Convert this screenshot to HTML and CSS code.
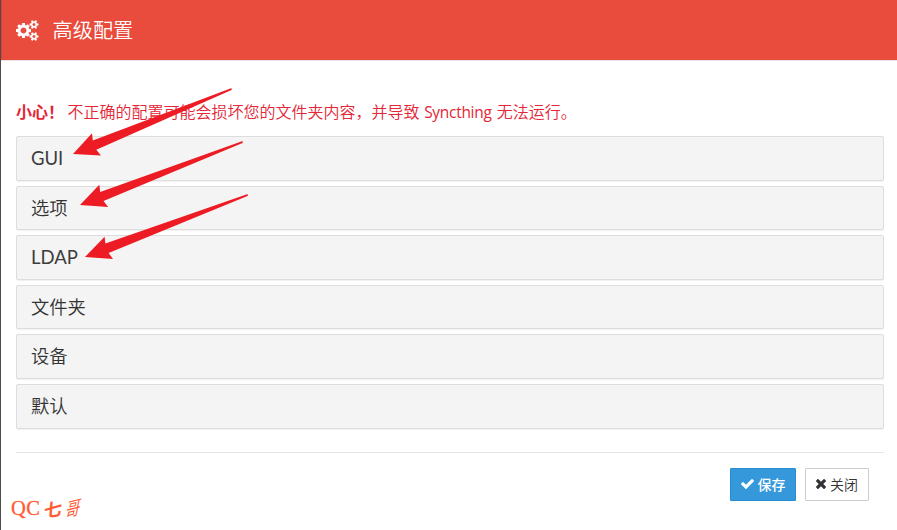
FILE: index.html
```html
<!DOCTYPE html>
<html lang="zh-CN">
<head>
<meta charset="utf-8">
<title>高级配置</title>
<link rel="stylesheet" href="styles.css">
</head>
<body>
<div class="modal">
  <header class="modal-header">
    <svg class="cogs" viewBox="0 0 1920 1792"><path d="M896 896q0-106-75-181t-181-75-181 75-75 181 75 181 181 75 181-75 75-181zm768 512q0-52-38-90t-90-38-90 38-38 90q0 53 37.500 90.500t90.500 37.500 90.500-37.500 37.500-90.500zm0-1024q0-52-38-90t-90-38-90 38-38 90q0 53 37.500 90.500t90.500 37.500 90.500-37.500 37.500-90.500zm-384 421v185q0 10-7 19.500t-16 10.500l-155 24q-11 35-32 76 34 48 90 115 7 11 7 20 0 12-7 19-23 30-82.500 89.500t-78.500 59.500q-11 0-21-7l-115-90q-37 19-77 31-11 108-23 155-7 24-30 24h-186q-11 0-20-7.500t-10-17.500l-23-153q-34-10-75-31l-118 89q-7 7-20 7-11 0-21-8-144-133-144-160 0-9 7-19 10-14 41-53t47-61q-23-44-35-82l-152-24q-10-1-17-9.500t-7-19.500v-185q0-10 7-19.500t16-10.500l155-24q11-35 32-76-34-48-90-115-7-11-7-20 0-12 7-20 22-30 82-89t79-59q11 0 21 7l115 90q34-18 77-32 11-108 23-154 7-24 30-24h186q11 0 20 7.500t10 17.500l23 153q34 10 75 31l118-89q8-7 20-7 11 0 21 8 144 133 144 160 0 8-7 19-12 16-42 54t-45 60q23 48 34 82l152 23q10 2 17 10.500t7 19.500zm640 533v140q0 16-149 31-12 27-30 52 51 113 51 138 0 4-4 7-122 71-124 71-8 0-46-47t-52-68q-20 2-30 2t-30-2q-14 21-52 68t-46 47q-2 0-124-71-4-3-4-7 0-25 51-138-18-25-30-52-149-15-149-31v-140q0-16 149-31 13-29 30-52-51-113-51-138 0-4 4-7 4-2 35-20t59-34 30-16q8 0 46 46.500t52 67.500q20-2 30-2t30 2q51-71 92-112l6-2q4 0 124 70 4 3 4 7 0 25-51 138 17 23 30 52 149 15 149 31zm0-1024v140q0 16-149 31-12 27-30 52 51 113 51 138 0 4-4 7-122 71-124 71-8 0-46-47t-52-68q-20 2-30 2t-30-2q-14 21-52 68t-46 47q-2 0-124-71-4-3-4-7 0-25 51-138-18-25-30-52-149-15-149-31v-140q0-16 149-31 13-29 30-52-51-113-51-138 0-4 4-7 4-2 35-20t59-34 30-16q8 0 46 46.500t52 67.500q20-2 30-2t30 2q51-71 92-112l6-2q4 0 124 70 4 3 4 7 0 25-51 138 17 23 30 52 149 15 149 31z"/></svg>
    <h1 class="title">高级配置</h1>
  </header>
  <main class="modal-body">
    <p class="warning"><strong>小心！</strong> 不正确的配置可能会损坏您的文件夹内容，并导致 <span class="product">Syncthing</span> 无法运行。</p>
    <div class="panels">
      <div class="panel"><span class="latin">GUI</span></div>
      <div class="panel">选项</div>
      <div class="panel"><span class="latin">LDAP</span></div>
      <div class="panel">文件夹</div>
      <div class="panel">设备</div>
      <div class="panel">默认</div>
    </div>
  </main>
  <footer class="modal-footer">
    <button class="btn save"><svg class="icon check" viewBox="121 334 1550 1188"><path d="M1671 566q0 40-28 68l-724 724-136 136q-28 28-68 28t-68-28l-136-136-362-362q-28-28-28-68t28-68l136-136q28-28 68-28t68 28l294 295 656-657q28-28 68-28t68 28l136 136q28 28 28 68z"/></svg><span>保存</span></button>
    <button class="btn close"><svg class="icon times" viewBox="302 366 1188 1188"><path d="M1490 1322q0 40-28 68l-136 136q-28 28-68 28t-68-28l-294-294-294 294q-28 28-68 28t-68-28l-136-136q-28-28-28-68t28-68l294-294-294-294q-28-28-28-68t28-68l136-136q28-28 68-28t68 28l294 294 294-294q28-28 68-28t68 28l136 136q28 28 28 68t-28 68l-294 294 294 294q28 28 28 68z"/></svg><span>关闭</span></button>
  </footer>
</div>
<svg class="arrows" viewBox="0 0 897 530">
  <path d="M73 154L92 133.300L92.800 140.500L231 88.300Q232.500 88.500 231.500 90L96.300 149.800L101 155.500Z"/>
  <path d="M80 205L99.300 184.800L100.200 192L242 141.200Q243.700 141.500 242.500 143L103.500 201L108.200 207Z"/>
  <path d="M85 257L104.600 236.700L105.400 243.400L247 194.200Q248.700 194.500 247.500 196L108.600 252.900L113 259Z"/>
</svg>
<div class="signature"><span class="qc">QC</span><span class="qi">七</span><span class="ge">哥</span></div>
</body>
</html>
```
FILE: styles.css
```css
* { box-sizing: border-box; }
body {
  margin: 0;
  width: 897px;
  height: 530px;
  overflow: hidden;
  background: #fff;
  color: #333;
  font-family: "Noto Sans", "Noto Sans CJK SC", sans-serif;
}
.modal {
  height: 530px;
  border-left: 1px solid #4c4c4e;
}
.modal-header {
  height: 60px;
  padding: 0 15px 0 14px;
  display: flex;
  align-items: center;
  gap: 14px;
  background: #e94c3d;
  border-left: 1px solid #df4032;
  color: #fff;
}
.cogs { width: 22.500px; height: 21px; fill: #fff; }
.title {
  margin: 0;
  font: 350 20.200px/30px "Noto Sans CJK SC", sans-serif;
}
.modal-body {
  padding: 38px 13px 0 15px;
  border-top: 1px solid #e5e5e5;
}
.warning {
  margin: 0 0 13px;
  height: 24px;
  font: 350 16px/24px "Noto Sans CJK SC", sans-serif;
  color: #e42637;
  white-space: nowrap;
}
.warning strong { font-weight: 700; }
.product {
  display: inline-block;
  width: 70px;
  padding-left: 1px;
  font: 400 15.500px/20px "Open Sans", sans-serif;
  letter-spacing: -.3px;
}
.panels { display: flex; flex-direction: column; gap: 5px; }
.panel {
  height: 44.600px;
  padding: 0 14px;
  border: 1px solid #ddd;
  border-radius: 2px;
  background: #f4f4f4;
  box-shadow: 0 1px 1px rgba(0, 0, 0, .06);
  font: 350 18.300px/41px "Noto Sans CJK SC", sans-serif;
}
.latin { font: 400 18.500px/41px "Lato", sans-serif; color: #3c3c3c; }
.modal-footer {
  margin: 23.400px 13px 0 15px;
  padding: 15px 15px 0;
  border-top: 1px solid #e5e5e5;
  display: flex;
  justify-content: flex-end;
  gap: 9px;
}
.btn {
  height: 33px;
  padding: 0;
  display: flex;
  align-items: center;
  justify-content: center;
  gap: 4px;
  border: 1px solid #ccc;
  border-radius: 1px;
  background: #fff;
  color: #333;
  font: 350 14px/20px "Noto Sans CJK SC", sans-serif;
}
.save { width: 66px; background: #3498db; border-color: #258cd1; color: #fff; font-weight: 500; }
.close { width: 64px; }
.icon { fill: currentColor; }
.check { width: 13px; height: 10px; }
.times { width: 10px; height: 10px; }
.arrows {
  position: absolute;
  left: 0;
  top: 0;
  width: 897px;
  height: 530px;
  fill: #ed1c24;
  pointer-events: none;
}
.signature {
  position: absolute;
  left: 11px;
  top: 496px;
  height: 24px;
  display: flex;
  align-items: center;
  color: #ff5c35;
  line-height: 24px;
}
.qc { width: 33px; font-family: "Liberation Serif", serif; font-size: 20.500px; letter-spacing: .4px; -webkit-text-stroke: .3px #ff5c35; }
.qi { width: 20px; font: 700 18px/24px "Noto Sans CJK SC", sans-serif; transform: skew(-4deg, -8deg); }
.ge { width: 18px; font: 400 20px/22px "Noto Sans CJK SC", sans-serif; transform: skew(-12deg, -14deg) scaleX(.72); }
```
